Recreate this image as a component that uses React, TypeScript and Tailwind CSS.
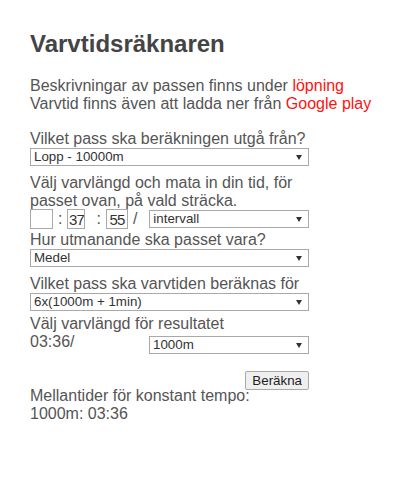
import React, { useState } from 'react';

const font = { fontFamily: '"Liberation Sans", Arial, sans-serif' };

const Select: React.FC<{
  value: string;
  options: string[];
  onChange: (v: string) => void;
  className?: string;
}> = ({ value, options, onChange, className = '' }) => (
  <div className={`relative h-[18px] ${className}`}>
    <select
      value={value}
      onChange={e => onChange(e.target.value)}
      className="block w-full h-[18px] appearance-none bg-white border border-[#a9a9a9] pl-[3px] pr-4 text-[13.33px] leading-[16px] text-[#333] outline-none"
      style={font}
    >
      {options.map(o => (
        <option key={o} value={o}>{o}</option>
      ))}
    </select>
    <svg
      className="pointer-events-none absolute right-[7px] top-[7px]"
      width="6"
      height="5"
      viewBox="0 0 6 5"
    >
      <path d="M0 0h6L3 5z" fill="#333" />
    </svg>
  </div>
);

export default function App() {
  const [pass, setPass] = useState('Lopp - 10000m');
  const [unit, setUnit] = useState('intervall');
  const [level, setLevel] = useState('Medel');
  const [target, setTarget] = useState('6x(1000m + 1min)');
  const [lap, setLap] = useState('1000m');
  const [h, setH] = useState('');
  const [m, setM] = useState('37');
  const [s, setS] = useState('55');

  // small time fields, digits are narrow in the original
  const timeInput = 'h-[20px] border border-[#a9a9a9] bg-white px-0 text-center text-[15px] tracking-[-1px] leading-[18px] text-[#333] outline-none';

  return (
    <div className="min-h-screen bg-white pl-[30px] pt-[30px] text-[16px] leading-[18px] text-[#555]" style={font}>
      <h1 className="text-[24px] font-bold leading-[28px] text-[#444]">Varvtidsräknaren</h1>

      <p className="mt-[19px]">
        Beskrivningar av passen finns under <a href="#" className="text-[#ff1111]">löpning</a>
        <br />
        Varvtid finns även att ladda ner från <a href="#" className="text-[#ff1111]">Google play</a>
      </p>

      <div className="mt-[17px] w-[279px]">
        <div>Vilket pass ska beräkningen utgå från?</div>
        <Select value={pass} onChange={setPass} options={['Lopp - 10000m', 'Lopp - 5000m', 'Lopp - Halvmaraton', 'Lopp - Maraton']} />

        <div className="mt-[8px] pr-2">Välj varvlängd och mata in din tid, för passet ovan, på vald sträcka.</div>
        <div className="flex items-center h-[20px] -mt-[1px]">
          <input value={h} onChange={e => setH(e.target.value)} className={`${timeInput} w-[23px]`} />
          <span className="mx-[5px]">:</span>
          <input value={m} onChange={e => setM(e.target.value)} className={`${timeInput} w-[18px]`} />
          <span className="ml-[11px] mr-[5px]">:</span>
          <input value={s} onChange={e => setS(e.target.value)} className={`${timeInput} w-[22px]`} />
          <span className="ml-[5px] mr-[12px]">/</span>
          <Select className="flex-1" value={unit} onChange={setUnit} options={['intervall', '400m', '1000m']} />
        </div>

        <div className="mt-[2px]">Hur utmanande ska passet vara?</div>
        <Select value={level} onChange={setLevel} options={['Lätt', 'Medel', 'Hårt']} />

        <div className="mt-[8px]">Vilket pass ska varvtiden beräknas för</div>
        <Select value={target} onChange={setTarget} options={['6x(1000m + 1min)', '5x(2000m + 2min)', '10x(400m + 1min)']} />

        <div className="mt-[4px]">Välj varvlängd för resultatet</div>
        <div className="flex items-start">
          <span className="w-[119px]">03:36/</span>
          <Select className="flex-1 mt-[3px]" value={lap} onChange={setLap} options={['400m', '1000m', '2000m']} />
        </div>

        <div className="mt-[17px] flex justify-end">
          <button
            type="button"
            className="h-[19px] border border-[#a9a9a9] bg-[#efefef] px-[6px] text-[13.33px] leading-[15px] text-[#222] rounded-[2px]"
            style={font}
          >
            Beräkna
          </button>
        </div>

        <div className="-mt-[3px]">Mellantider för konstant tempo:</div>
        <div>1000m: 03:36</div>
      </div>
    </div>
  );
}
